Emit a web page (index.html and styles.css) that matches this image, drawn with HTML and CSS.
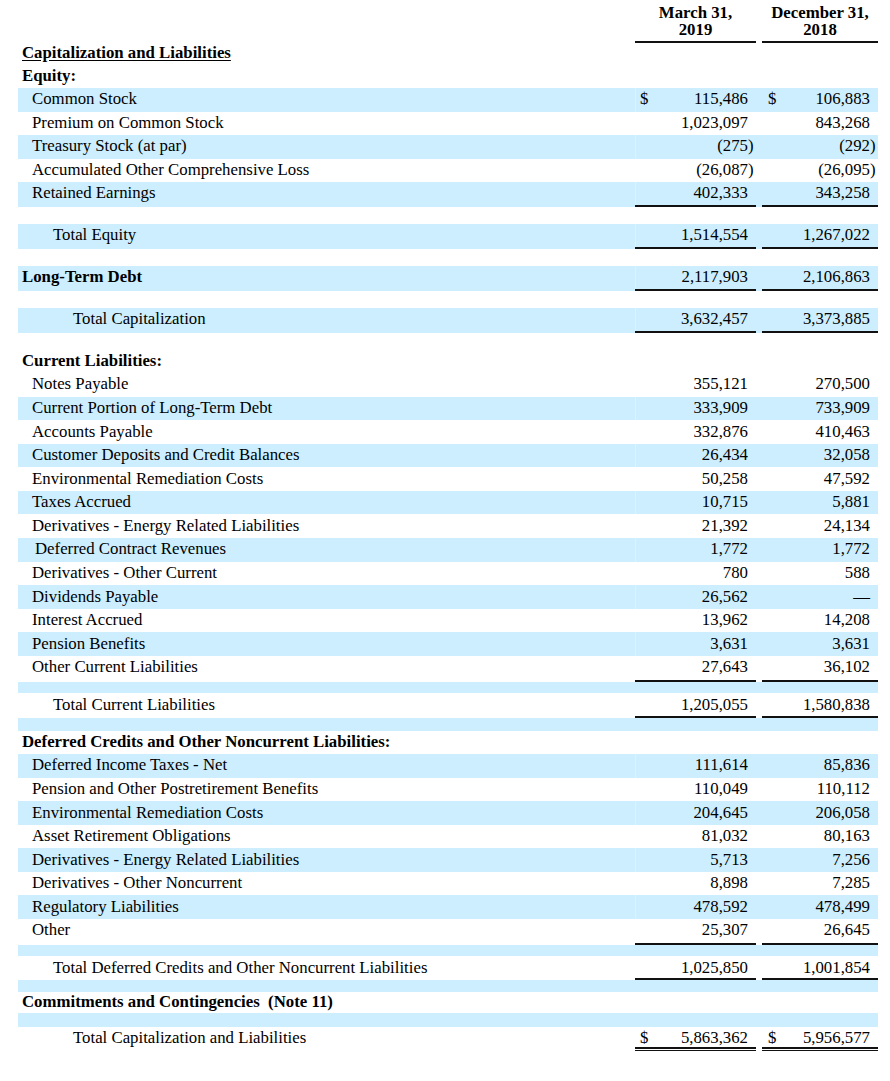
FILE: index.html
```html
<!DOCTYPE html>
<html>
<head>
<meta charset="utf-8">
<title>Capitalization and Liabilities</title>
<link rel="stylesheet" href="styles.css">
</head>
<body>
<div class="sheet">
  <div class="row head">
    <div class="lab"></div>
    <div class="c1 hd"><span>March 31,</span><span>2019</span></div>
    <div class="gap"></div>
    <div class="c2 hd"><span>December 31,</span><span>2018</span></div>
  </div>
  <div class="row r-cap"><div class="lab l0 b u">Capitalization and Liabilities</div></div>
  <div class="row r-eq"><div class="lab l0 b">Equity:</div></div>

  <div class="row r235 band"><div class="lab l1">Common Stock</div><div class="c1"><span class="cur">$</span><span>115,486</span></div><div class="gap"></div><div class="c2"><span class="cur">$</span><span>106,883</span></div></div>
  <div class="row r235"><div class="lab l1">Premium on Common Stock</div><div class="c1"><span>1,023,097</span></div><div class="gap"></div><div class="c2"><span>843,268</span></div></div>
  <div class="row r235 band"><div class="lab l1">Treasury Stock (at par)</div><div class="c1"><span>(275<span class="rp">)</span></span></div><div class="gap"></div><div class="c2"><span>(292<span class="rp">)</span></span></div></div>
  <div class="row r235"><div class="lab l1">Accumulated Other Comprehensive Loss</div><div class="c1"><span>(26,087<span class="rp">)</span></span></div><div class="gap"></div><div class="c2"><span>(26,095<span class="rp">)</span></span></div></div>
  <div class="row r-ret band ul"><div class="lab l1">Retained Earnings</div><div class="c1"><span>402,333</span></div><div class="gap"></div><div class="c2"><span>343,258</span></div></div>
  <div class="row sp1"></div>

  <div class="row r-tot band ul"><div class="lab l2">Total Equity</div><div class="c1"><span>1,514,554</span></div><div class="gap"></div><div class="c2"><span>1,267,022</span></div></div>
  <div class="row sp2"></div>
  <div class="row r-tot band ul"><div class="lab l0 b">Long-Term Debt</div><div class="c1"><span>2,117,903</span></div><div class="gap"></div><div class="c2"><span>2,106,863</span></div></div>
  <div class="row sp2"></div>
  <div class="row r-tot band ul"><div class="lab l3">Total Capitalization</div><div class="c1"><span>3,632,457</span></div><div class="gap"></div><div class="c2"><span>3,373,885</span></div></div>
  <div class="row sp2"></div>

  <div class="row r23"><div class="lab l0 b">Current Liabilities:</div></div>
  <div class="row r236"><div class="lab l1">Notes Payable</div><div class="c1"><span>355,121</span></div><div class="gap"></div><div class="c2"><span>270,500</span></div></div>
  <div class="row r236 band"><div class="lab l1">Current Portion of Long-Term Debt</div><div class="c1"><span>333,909</span></div><div class="gap"></div><div class="c2"><span>733,909</span></div></div>
  <div class="row r236"><div class="lab l1">Accounts Payable</div><div class="c1"><span>332,876</span></div><div class="gap"></div><div class="c2"><span>410,463</span></div></div>
  <div class="row r236 band"><div class="lab l1">Customer Deposits and Credit Balances</div><div class="c1"><span>26,434</span></div><div class="gap"></div><div class="c2"><span>32,058</span></div></div>
  <div class="row r236"><div class="lab l1">Environmental Remediation Costs</div><div class="c1"><span>50,258</span></div><div class="gap"></div><div class="c2"><span>47,592</span></div></div>
  <div class="row r236 band"><div class="lab l1">Taxes Accrued</div><div class="c1"><span>10,715</span></div><div class="gap"></div><div class="c2"><span>5,881</span></div></div>
  <div class="row r236"><div class="lab l1">Derivatives - Energy Related Liabilities</div><div class="c1"><span>21,392</span></div><div class="gap"></div><div class="c2"><span>24,134</span></div></div>
  <div class="row r236 band"><div class="lab l1x">Deferred Contract Revenues</div><div class="c1"><span>1,772</span></div><div class="gap"></div><div class="c2"><span>1,772</span></div></div>
  <div class="row r236"><div class="lab l1">Derivatives - Other Current</div><div class="c1"><span>780</span></div><div class="gap"></div><div class="c2"><span>588</span></div></div>
  <div class="row r236 band"><div class="lab l1">Dividends Payable</div><div class="c1"><span>26,562</span></div><div class="gap"></div><div class="c2"><span>—</span></div></div>
  <div class="row r236"><div class="lab l1">Interest Accrued</div><div class="c1"><span>13,962</span></div><div class="gap"></div><div class="c2"><span>14,208</span></div></div>
  <div class="row r236 band"><div class="lab l1">Pension Benefits</div><div class="c1"><span>3,631</span></div><div class="gap"></div><div class="c2"><span>3,631</span></div></div>
  <div class="row r236 ul"><div class="lab l1">Other Current Liabilities</div><div class="c1"><span>27,643</span></div><div class="gap"></div><div class="c2"><span>36,102</span></div></div>
  <div class="row sp3 band"></div>
  <div class="row r-tcl ul"><div class="lab l2">Total Current Liabilities</div><div class="c1"><span>1,205,055</span></div><div class="gap"></div><div class="c2"><span>1,580,838</span></div></div>
  <div class="row sp4 band"></div>

  <div class="row r23"><div class="lab l0 b">Deferred Credits and Other Noncurrent Liabilities:</div></div>
  <div class="row r236 band"><div class="lab l1">Deferred Income Taxes - Net</div><div class="c1"><span>111,614</span></div><div class="gap"></div><div class="c2"><span>85,836</span></div></div>
  <div class="row r236"><div class="lab l1">Pension and Other Postretirement Benefits</div><div class="c1"><span>110,049</span></div><div class="gap"></div><div class="c2"><span>110,112</span></div></div>
  <div class="row r236 band"><div class="lab l1">Environmental Remediation Costs</div><div class="c1"><span>204,645</span></div><div class="gap"></div><div class="c2"><span>206,058</span></div></div>
  <div class="row r236"><div class="lab l1">Asset Retirement Obligations</div><div class="c1"><span>81,032</span></div><div class="gap"></div><div class="c2"><span>80,163</span></div></div>
  <div class="row r236 band"><div class="lab l1">Derivatives - Energy Related Liabilities</div><div class="c1"><span>5,713</span></div><div class="gap"></div><div class="c2"><span>7,256</span></div></div>
  <div class="row r236"><div class="lab l1">Derivatives - Other Noncurrent</div><div class="c1"><span>8,898</span></div><div class="gap"></div><div class="c2"><span>7,285</span></div></div>
  <div class="row r236 band"><div class="lab l1">Regulatory Liabilities</div><div class="c1"><span>478,592</span></div><div class="gap"></div><div class="c2"><span>478,499</span></div></div>
  <div class="row r236 ul"><div class="lab l1">Other</div><div class="c1"><span>25,307</span></div><div class="gap"></div><div class="c2"><span>26,645</span></div></div>
  <div class="row sp5 band"></div>
  <div class="row r-tdc ul"><div class="lab l2">Total Deferred Credits and Other Noncurrent Liabilities</div><div class="c1"><span>1,025,850</span></div><div class="gap"></div><div class="c2"><span>1,001,854</span></div></div>
  <div class="row sp6 band"></div>
  <div class="row r-com"><div class="lab l0 b">Commitments and Contingencies&nbsp; (Note 11)</div></div>
  <div class="row sp7 band"></div>
  <div class="row r-gt dul"><div class="lab l3">Total Capitalization and Liabilities</div><div class="c1"><span class="cur">$</span><span>5,863,362</span></div><div class="gap"></div><div class="c2"><span class="cur">$</span><span>5,956,577</span></div></div>
</div>
</body>
</html>
```

FILE: styles.css
```css
html, body {
  margin: 0;
  padding: 0;
  background: #ffffff;
}

body {
  font-family: "Liberation Serif", "Times New Roman", serif;
  font-size: 16.8px;
  color: #000000;
}

.sheet {
  width: 860px;
  margin-left: 18px;
}

.row {
  display: grid;
  grid-template-columns: 617px 121px 6px 116px;
  box-sizing: border-box;
}

.band {
  background: #cceeff;
}

.lab {
  display: flex;
  align-items: center;
  white-space: nowrap;
  line-height: 1;
  box-sizing: border-box;
}

.c1, .c2 {
  display: flex;
  align-items: center;
  justify-content: flex-end;
  white-space: nowrap;
  line-height: 1;
  box-sizing: border-box;
}

.c1 { padding: 0 8px 0 5px; }
.c2 { padding: 0 8px 0 6px; }

.band .c1 { box-shadow: inset 1px 0 0 #dcf3ff; }

.cur { margin-right: auto; }

.rp { margin-right: -0.333em; }

.l0 { padding-left: 4px; }
.l1 { padding-left: 14px; }
.l1x { padding-left: 17px; }
.l2 { padding-left: 35px; }
.l3 { padding-left: 55px; }

.b { font-weight: bold; }
.u { text-decoration: underline; text-underline-offset: 2px; }

/* header */
.head { height: 43px; }
.hd {
  flex-direction: column;
  justify-content: flex-end;
  align-items: center;
  text-align: center;
  font-weight: bold;
  padding: 0 0 3px 0;
  border-bottom: 2px solid #111;
}
.hd span {
  display: block;
  height: 17px;
  line-height: 17px;
}

/* row heights */
.r-cap { height: 21px; }
.r-eq { height: 24px; }
.r235 { height: 23.5px; }
.r236 { height: 23.58px; }
.r23 { height: 23px; }
.r-ret { height: 24.5px; }
.r-tot { height: 25px; }
.r-tcl { height: 25px; }
.r-tcl .lab, .r-tcl .c1, .r-tcl .c2 { padding-top: 2px; }
.r-tdc { height: 23.5px; }
.r-tdc .lab, .r-tdc .c1, .r-tdc .c2 { padding-top: 3px; }
.r-com { height: 21px; }
.r-gt { height: 24px; }
.r-gt .lab, .r-gt .c1, .r-gt .c2 { padding-top: 3px; }

.r236.ul { height: 25.58px; }

.sp1 { height: 17.5px; }
.sp2 { height: 17px; }
.sp3 { height: 11.5px; }
.sp4 { height: 13px; }
.sp5 { height: 11.4px; }
.sp6 { height: 12.5px; }
.sp7 { height: 14px; }

.ul .lab { padding-bottom: 2px; }
.ul .c1, .ul .c2 { border-bottom: 2px solid #111; }

.dul .lab { padding-bottom: 5px; }
.dul .c1, .dul .c2 { border-bottom: 5px double #111; }
```
